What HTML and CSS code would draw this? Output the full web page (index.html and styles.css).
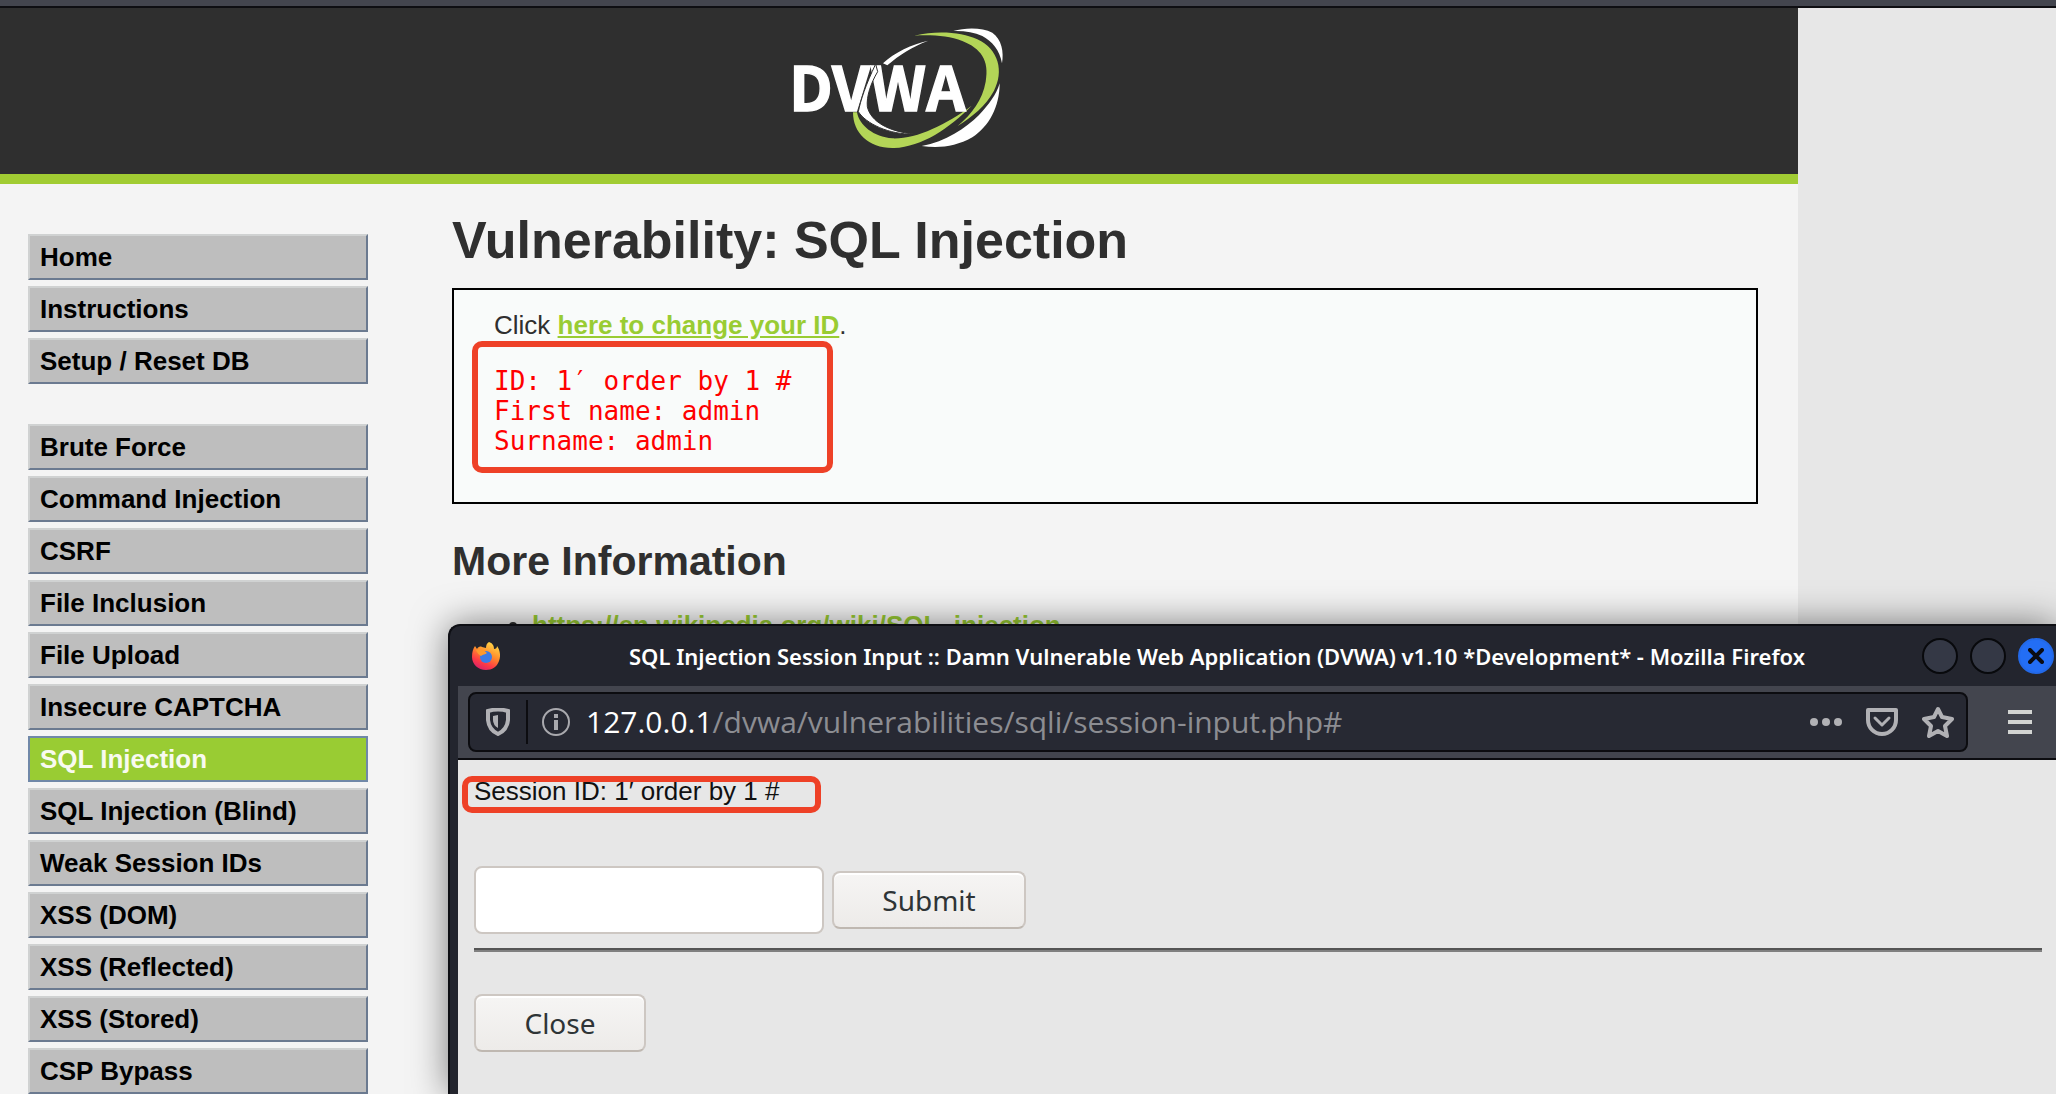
FILE: index.html
```html
<!DOCTYPE html>
<html lang="en">
<head>
<meta charset="utf-8">
<title>Vulnerability: SQL Injection</title>
<link rel="stylesheet" href="styles.css">
</head>
<body>
<div class="desktop">
  <div class="browser-edge"></div>
  <div class="site">
    <header class="site-header">
      <svg class="logo" viewBox="90 66 660 390" role="img" aria-label="DVWA">
        <path fill="#fff" d="M583 93C620 82 670 82 700 98C728 118 735 155 729 190C722 150 700 125 670 108C645 96 615 92 583 93Z"/>
        <path fill="#fff" d="M722 250C722 320 690 380 640 412C590 440 540 446 488 438C560 425 620 385 660 345C690 312 712 285 722 250Z"/>
        <path fill="#b3d557" d="M466 107C540 90 610 98 655 118C720 148 735 215 705 272C680 318 640 350 596 378C640 340 670 300 680 245C692 180 665 145 610 123C570 108 520 104 466 107Z"/>
        <path fill="#b3d557" d="M282 337L294 337C300 375 345 412 400 415C470 418 560 375 638 317C570 385 490 440 405 444C330 446 282 400 282 337Z"/>
        <path fill="#fff" d="M508 122C460 132 405 158 372 190L385 196C420 165 460 140 508 122Z"/>
        <text class="logo-text" x="90" y="333">DVWA</text>
        <path fill="#fff" stroke="#2f2f2f" stroke-width="3" d="M350 192C320 255 305 300 298 335C320 370 390 405 465 402C390 395 335 365 325 320C322 290 335 250 356 215Z"/>
      </svg>
    </header>
    <div class="columns">
      <nav class="menu">
        <ul class="menu-group">
          <li><a href="#">Home</a></li>
          <li><a href="#">Instructions</a></li>
          <li><a href="#">Setup / Reset DB</a></li>
        </ul>
        <ul class="menu-group">
          <li><a href="#">Brute Force</a></li>
          <li><a href="#">Command Injection</a></li>
          <li><a href="#">CSRF</a></li>
          <li><a href="#">File Inclusion</a></li>
          <li><a href="#">File Upload</a></li>
          <li><a href="#">Insecure CAPTCHA</a></li>
          <li><a href="#" class="selected">SQL Injection</a></li>
          <li><a href="#">SQL Injection (Blind)</a></li>
          <li><a href="#">Weak Session IDs</a></li>
          <li><a href="#">XSS (DOM)</a></li>
          <li><a href="#">XSS (Reflected)</a></li>
          <li><a href="#">XSS (Stored)</a></li>
          <li><a href="#">CSP Bypass</a></li>
        </ul>
      </nav>
      <main class="main">
        <h1>Vulnerability: SQL Injection</h1>
        <div class="result">
          <p>Click <a href="#">here to change your ID</a>.</p>
          <pre class="output">ID: 1′ order by 1 #
First name: admin
Surname: admin<span class="mark mark-output"></span></pre>
        </div>
        <h2>More Information</h2>
        <ul class="links">
          <li><a href="#">https://en.wikipedia.org/wiki/SQL_injection</a></li>
        </ul>
      </main>
    </div>
  </div>

  <section class="popup">
    <div class="titlebar">
      <svg class="firefox" viewBox="0 0 28 28" aria-hidden="true">
        <defs>
          <linearGradient id="flame" x1="0.8" y1="0" x2="0.3" y2="1">
            <stop offset="0" stop-color="#ffe04a"/><stop offset="0.45" stop-color="#ff8a2b"/><stop offset="0.75" stop-color="#ff3b45"/><stop offset="1" stop-color="#d9216a"/>
          </linearGradient>
        </defs>
        <path fill="url(#flame)" d="M17 0C20 1 22 3 22 7C24 7 25 6 25 4C28 8 29 14 27 19C25 25 20 28 14 28C6 28 0 22 0 15C0 10 1 7 3 4L5 7C6 5 8 4 10 5L14 6C14 3 15 1 17 0Z"/>
        <circle cx="14" cy="15" r="6" fill="#3b7be8"/>
        <path fill="#ff9a2e" d="M4 8C8 6 12 8 15 11C13 13 11 12 9 14C7 13 5 11 4 8Z"/>
      </svg>
      <span class="title">SQL Injection Session Input :: Damn Vulnerable Web Application (DVWA) v1.10 *Development* - Mozilla Firefox</span>
      <div class="window-buttons">
        <button class="round" aria-label="Minimize"></button>
        <button class="round" aria-label="Maximize"></button>
        <button class="round close" aria-label="Close window">
          <svg viewBox="0 0 16 16" width="16" height="16"><path d="M2 2L14 14M14 2L2 14" stroke="#0b0c12" stroke-width="4" stroke-linecap="round"/></svg>
        </button>
      </div>
    </div>
    <div class="toolbar">
      <div class="urlbar">
        <svg class="shield" viewBox="0 0 24 28"><path d="M2 3Q12 0 22 3V12Q21 22 12 26Q3 22 2 12Z" fill="none" stroke="#b1b1b5" stroke-width="4"/><path d="M12 7V20Q7 17 7 12V8Z" fill="#b1b1b5"/></svg>
        <span class="divider"></span>
        <svg class="info" viewBox="0 0 28 28"><circle cx="14" cy="14" r="13" fill="none" stroke="#a9a9ae" stroke-width="2"/><path d="M12 6H16V10H12ZM12 12H16V22H12Z" fill="#a9a9ae"/></svg>
        <span class="address"><span class="host">127.0.0.1</span>/dvwa/vulnerabilities/sqli/session-input.php#</span>
        <svg class="icon" viewBox="0 0 32 32"><g fill="#b1b1b5"><circle cx="4" cy="16" r="4"/><circle cx="16" cy="16" r="4"/><circle cx="28" cy="16" r="4"/></g></svg>
        <svg class="icon" viewBox="0 0 32 32"><path d="M2 4H30V14A14 14 0 0 1 2 14Z" fill="none" stroke="#b1b1b5" stroke-width="4" stroke-linejoin="round"/><path d="M9 12L16 19L23 12" fill="none" stroke="#b1b1b5" stroke-width="3" stroke-linecap="round" stroke-linejoin="round"/></svg>
        <svg class="icon" viewBox="0 0 32 32"><path d="M16 3L20 11L30 13L23 20L25 30L16 25L7 30L9 20L2 13L12 11Z" fill="none" stroke="#b1b1b5" stroke-width="4" stroke-linejoin="round"/></svg>
      </div>
      <button class="hamburger" aria-label="Open menu"><svg viewBox="0 0 24 24" width="24" height="24"><path d="M0 0H24V4H0ZM0 10H24V14H0ZM0 20H24V24H0Z" fill="#d3d4d2"/></svg></button>
    </div>
    <div class="popup-page">
      <p class="session">Session ID: 1′ order by 1 #<span class="mark mark-session"></span></p>
      <form class="session-form">
        <input type="text" aria-label="Session ID">
        <button class="button submit" type="button">Submit</button>
      </form>
      <hr>
      <button class="button" type="button">Close</button>
    </div>
  </section>
</div>
</body>
</html>
```
FILE: styles.css
```css
* {
  box-sizing: border-box;
}

body {
  margin: 0;
  background: #e7e7e7;
  color: #2f2f2f;
  font: 26px/30px "Liberation Sans", Arial, sans-serif;
}

h1, h2, p, pre, ul {
  margin: 0;
  padding: 0;
}

button {
  padding: 0;
  border: 0;
  background: none;
}

.desktop {
  position: relative;
  height: 100vh;
  overflow: hidden;
}

.browser-edge {
  height: 8px;
  background: #43454e;
  border-bottom: 2px solid #0e0e12;
}

.site {
  width: 87.45%;
  min-height: 100%;
  background: #f4f4f4;
}

.site-header {
  display: flex;
  justify-content: center;
  padding: 14px 0 22px;
  background: #2f2f2f;
  border-bottom: 10px solid #a1cc33;
}

.logo {
  width: 220px;
  height: 130px;
}

.logo-text {
  fill: #fff;
  stroke: #fff;
  stroke-width: 4px;
  font: bold 184px "Noto Sans CJK SC", "Open Sans", sans-serif;
}

.columns {
  display: grid;
  grid-template-columns: 340px 1fr;
  gap: 84px;
  padding: 0 40px 0 28px;
}

.menu {
  display: flex;
  flex-direction: column;
  gap: 40px;
  padding-top: 50px;
}

.menu-group {
  display: flex;
  flex-direction: column;
  gap: 6px;
  list-style: none;
}

.menu-group a {
  display: block;
  padding: 6px 10px;
  border: 2px solid;
  border-color: #d0d2d2 #6b7a90 #6b7a90 #d0d2d2;
  background: #bebebe;
  color: #000;
  font-weight: bold;
  text-decoration: none;
}

.menu-group .selected {
  border-color: #7088a8;
  background: #99cc33;
  color: #f8faf0;
}

.main {
  padding-top: 24px;
}

h1 {
  font-size: 52px;
  line-height: 64px;
}

.result {
  margin: 16px 0 32px;
  padding: 20px 40px 46px;
  border: 2px solid #000;
  background: #f9fbfa;
}

.main a {
  color: #99cc33;
  font-weight: bold;
}

.output {
  position: relative;
  margin-top: 26px;
  color: #f00;
  font: 26px/30px "DejaVu Sans Mono", monospace;
}

.mark {
  position: absolute;
  border: 6px solid #ee4127;
  border-radius: 10px;
}

.mark-output {
  top: -25px;
  left: -22px;
  width: 361px;
  height: 132px;
}

h2 {
  font-size: 41px;
  line-height: 50px;
}

.links {
  margin-top: 24px;
  padding-left: 80px;
}

.popup {
  position: absolute;
  top: 624px;
  right: 0;
  bottom: 0;
  left: 448px;
  display: flex;
  flex-direction: column;
  border-top: 2px solid #0e0f14;
  border-left: 2px solid #0e0f14;
  border-top-left-radius: 12px;
  padding-left: 8px;
  background: #23252e;
  box-shadow: 0 0 36px rgba(0, 0, 0, 0.5);
}

.titlebar {
  display: flex;
  align-items: center;
  height: 60px;
  padding: 0 2px 0 14px;
}

.firefox {
  width: 28px;
  height: 28px;
}

.title {
  flex: 1;
  padding-left: 12px;
  color: #fff;
  font: 600 22px/32px "Noto Sans", sans-serif;
  text-align: center;
  white-space: nowrap;
}

.window-buttons {
  display: flex;
  gap: 12px;
}

.round {
  display: flex;
  align-items: center;
  justify-content: center;
  width: 36px;
  height: 36px;
  border: 2px solid #08090c;
  border-radius: 50%;
  background: #343845;
}

.round.close {
  border-color: #2369e8;
  background: #236ef5;
}

.toolbar {
  display: flex;
  align-items: center;
  gap: 40px;
  height: 74px;
  padding: 0 24px 0 10px;
  border-bottom: 2px solid #0c0c10;
  background: #43454e;
}

.urlbar {
  flex: 1;
  display: flex;
  align-items: center;
  height: 60px;
  padding: 0 12px 0 16px;
  border: 2px solid #0c0c10;
  border-radius: 8px;
  background: #272933;
}

.shield {
  width: 24px;
  height: 28px;
}

.divider {
  width: 2px;
  height: 44px;
  margin: 0 14px 0 16px;
  background: #0c0c10;
}

.info {
  width: 28px;
  height: 28px;
}

.address {
  flex: 1;
  padding-left: 16px;
  color: #8c8d92;
  font: 30px/40px "Open Sans", "Noto Sans", sans-serif;
}

.host {
  color: #fff;
}

.icon {
  width: 32px;
  height: 32px;
  margin-left: 24px;
}

.hamburger {
  display: flex;
}

.popup-page {
  flex: 1;
  padding: 16px 14px 0 16px;
  background: #e7e7e7;
}

.session {
  position: relative;
  color: #111;
}

.mark-session {
  top: 0;
  left: -12px;
  width: 359px;
  height: 37px;
}

.session-form {
  display: flex;
  align-items: center;
  gap: 8px;
  margin-top: 60px;
}

.session-form input {
  width: 350px;
  height: 68px;
  padding: 0 12px;
  border: 2px solid #cdc7c2;
  border-radius: 8px;
  background: #fff;
  font: 28px/32px "Noto Sans", sans-serif;
}

.button {
  width: 172px;
  height: 58px;
  border: 2px solid #cdc7c2;
  border-bottom-color: #bfb8b1;
  border-radius: 8px;
  background: linear-gradient(#f6f5f4, #edebe9);
  box-shadow: inset 0 2px #fff;
  color: #2e3436;
  font: 28px/32px "Noto Sans", sans-serif;
}

.submit {
  width: 194px;
}

hr {
  height: 4px;
  margin: 14px 0 42px;
  border: 0;
  border-top: 2px solid #555;
  background: #808080;
}
```
